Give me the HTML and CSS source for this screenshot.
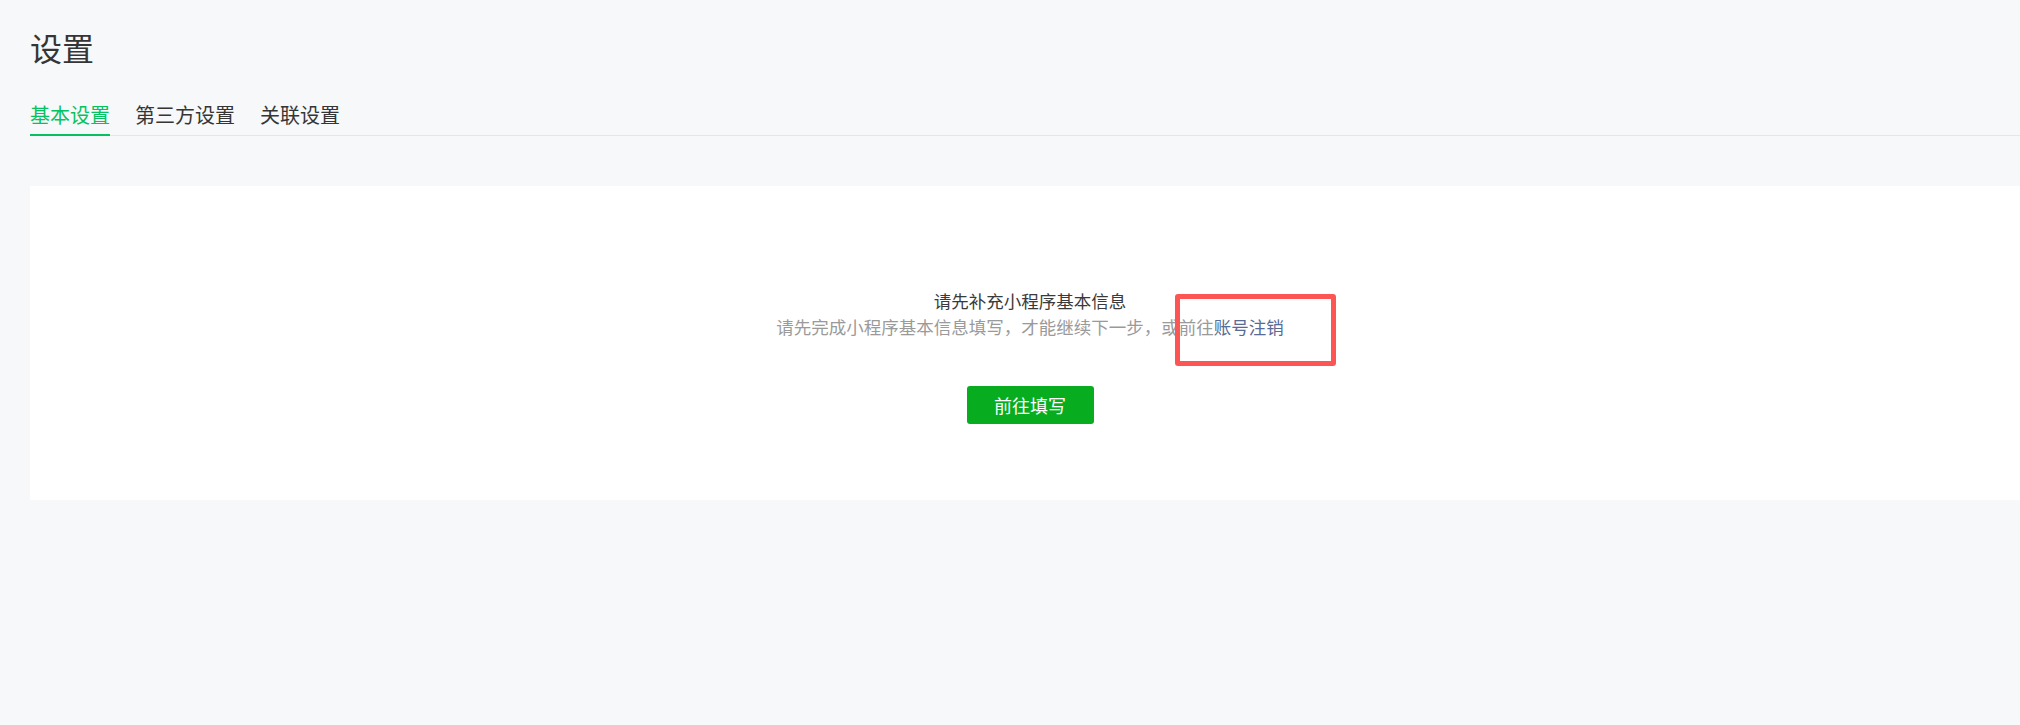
FILE: index.html
```html
<!DOCTYPE html>
<html lang="zh-CN">
<head>
<meta charset="utf-8">
<title>设置</title>
<link rel="stylesheet" href="styles.css">
</head>
<body>
<div class="page">
  <h1 class="page-title">设置</h1>
  <nav class="tabs">
    <a class="tab tab-active">基本设置</a>
    <a class="tab">第三方设置</a>
    <a class="tab">关联设置</a>
  </nav>
  <section class="card">
    <div class="empty">
      <p class="empty-title">请先补充小程序基本信息</p>
      <p class="empty-desc">请先完成小程序基本信息填写，才能继续下一步，或前往<a class="link">账号注销</a></p>
      <button class="btn-primary">前往填写</button>
    </div>
  </section>
</div>
<div class="highlight-box"></div>
</body>
</html>
```

FILE: styles.css
```css
html, body {
  margin: 0;
  padding: 0;
  overflow: hidden;
}
body {
  background: #f7f8fa;
  font-family: "Noto Sans CJK SC", "Noto Sans", sans-serif;
  color: #353535;
  width: 2020px;
  height: 725px;
  position: relative;
}
.page {
  padding: 25px 0 0 30px;
}
.page-title {
  margin: 0;
  font-size: 32px;
  line-height: 44px;
  font-weight: normal;
  color: #353535;
}
.tabs {
  display: flex;
  gap: 25px;
  margin-top: 32px;
  border-bottom: 1px solid #e4e6ea;
  margin-right: -30px;
}
.tab {
  font-size: 20px;
  line-height: 28px;
  padding-bottom: 5px;
  border-bottom: 2px solid transparent;
  margin-bottom: -1px;
  color: #353535;
  cursor: pointer;
}
.tab-active {
  color: #07c160;
  border-bottom-color: #07c160;
}
.card {
  margin-top: 50px;
  width: 2000px;
  background: #ffffff;
  padding: 102px 0 76px;
}
.empty {
  display: flex;
  flex-direction: column;
  align-items: center;
  text-align: center;
}
.empty-title {
  margin: 0;
  font-size: 17.5px;
  line-height: 26px;
  color: #3a3a3a;
}
.empty-desc {
  margin: 0;
  font-size: 17.5px;
  line-height: 26px;
  color: #9a9a9a;
}
.link {
  color: #576b95;
  cursor: pointer;
}
.btn-primary {
  margin-top: 46px;
  width: 127px;
  height: 38px;
  border: none;
  border-radius: 3px;
  background: #07ad1f;
  color: #ffffff;
  font-family: inherit;
  font-size: 18px;
  line-height: 38px;
  padding: 0;
}
.highlight-box {
  position: absolute;
  left: 1175px;
  top: 294px;
  width: 161px;
  height: 72px;
  box-sizing: border-box;
  border: 5px solid #fd5554;
  border-radius: 3px;
}
```
